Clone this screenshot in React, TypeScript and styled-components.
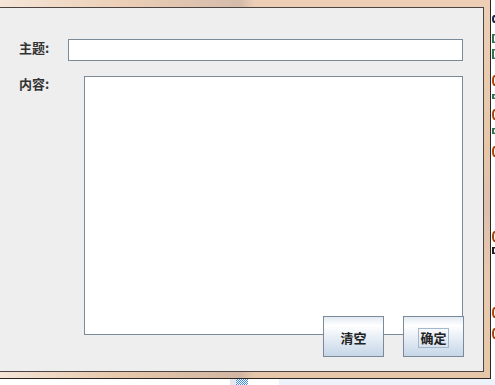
import React, { useState } from 'react';
import styled, { createGlobalStyle } from 'styled-components';

const GlobalStyle = createGlobalStyle`
  html, body {
    margin: 0;
    padding: 0;
    background: #ffffff;
  }
  * {
    box-sizing: border-box;
  }
`;

const Screen = styled.div`
  width: 495px;
  height: 385px;
  display: flex;
  flex-direction: column;
  overflow: hidden;
  background: #ffffff;
  font-family: "Noto Sans CJK SC", "Noto Sans", sans-serif;
`;

const TopRow = styled.div`
  display: flex;
  height: 379px;
`;

// window frame: beige glass border on top, right and bottom
const Frame = styled.div`
  width: 491px;
  height: 379px;
  padding: 7px 6px 6px 0;
  border-right: 1px solid #2b2622;
  border-bottom: 1px solid #2b2622;
  background:
    linear-gradient(90deg, rgba(246,232,220,0.9) 0%, rgba(246,232,220,0) 25%, rgba(170,150,150,0.35) 49%, rgba(255,255,255,0) 52%),
    linear-gradient(180deg, #eccfb6 0%, #e7c6a8 40%, #dcbfae 55%, #e9c9ad 75%, #e6c7aa 100%);
  display: flex;
`;

const Panel = styled.div`
  flex: 1;
  background: #eeeeee;
  border-top: 1px solid #4b4440;
  border-right: 1px solid #4b4440;
  border-bottom: 1px solid #4b4440;
  padding: 31px 0 0 19px;
  display: flex;
  flex-direction: column;
`;

const Row = styled.div<{ $gap?: number }>`
  display: flex;
  align-items: flex-start;
  margin-top: ${p => p.$gap ?? 0}px;
`;

const Label = styled.label<{ $width: number; $offset: number }>`
  width: ${p => p.$width}px;
  padding-top: ${p => p.$offset}px;
  font-size: 13px;
  line-height: 16px;
  font-weight: 700;
  color: #333333;
`;

const TextField = styled.input`
  width: 395px;
  height: 22px;
  border: 1px solid #7a8a99;
  background: #ffffff;
  outline: none;
  padding: 0 3px;
  font-size: 13px;
  font-family: inherit;
`;

const ContentColumn = styled.div`
  width: 380px;
  display: flex;
  flex-direction: column;
`;

const TextArea = styled.textarea`
  width: 379px;
  height: 259px;
  border: 1px solid #7a8a99;
  background: #ffffff;
  outline: none;
  resize: none;
  padding: 2px 3px;
  font-size: 13px;
  font-family: inherit;
`;

const ButtonRow = styled.div`
  display: flex;
  justify-content: flex-end;
  gap: 19px;
  margin-top: -19px;
`;

const Button = styled.button`
  width: 61px;
  height: 41px;
  padding: 0;
  border: 1px solid #7a8a99;
  background: linear-gradient(180deg, #e3eaf2 0%, #ffffff 22%, #e6edf5 55%, #c6d6e8 100%);
  font-family: inherit;
  font-size: 13px;
  font-weight: 700;
  color: #222222;
  display: flex;
  align-items: center;
  justify-content: center;
  cursor: pointer;
`;

const ButtonText = styled.span<{ $focused?: boolean }>`
  display: block;
  line-height: 18px;
  padding: 0 1px;
  margin-top: 2px;
  border: 1px solid ${p => (p.$focused ? '#a3b8cc' : 'transparent')};
`;

// sliver of the desktop behind the dialog (bits of an editor window)
const SideStrip = styled.div`
  width: 4px;
  display: flex;
  flex-direction: column;
  padding-left: 1px;
`;

const Mark = styled.div<{ $color: string; $top: number; $h: number; $ring?: boolean }>`
  margin-top: ${p => p.$top}px;
  height: ${p => p.$h}px;
  width: ${p => (p.$ring ? 5 : 2)}px;
  border: 2px solid ${p => p.$color};
  border-right-color: ${p => (p.$ring ? p.$color : 'transparent')};
  border-radius: ${p => (p.$ring ? '50%' : '0')};
`;

const BottomStrip = styled.div`
  height: 6px;
  display: flex;
`;

const Segment = styled.div<{ $width: number; $bg: string }>`
  width: ${p => p.$width}px;
  background: ${p => p.$bg};
`;

const Checker = styled.div`
  width: 12px;
  background-color: #ffffff;
  background-image: repeating-conic-gradient(#3d8ef0 0% 25%, #ffffff 0% 50%);
  background-size: 2px 2px;
`;

const marks = [
  { color: '#1e2a4a', top: 15, h: 8, ring: true },
  { color: '#2a7a5a', top: 11, h: 9 },
  { color: '#2a7a5a', top: 6, h: 10 },
  { color: '#a8460a', top: 16, h: 11, ring: true },
  { color: '#2a7a5a', top: 8, h: 5 },
  { color: '#a8460a', top: 10, h: 11, ring: true },
  { color: '#2a7a5a', top: 8, h: 6 },
  { color: '#a8460a', top: 12, h: 11, ring: true },
  { color: '#a8460a', top: 74, h: 11, ring: true },
  { color: '#222222', top: 5, h: 7 },
  { color: '#a8460a', top: 53, h: 11, ring: true },
  { color: '#a8460a', top: 10, h: 11, ring: true },
];

const App = () => {
  const [title, setTitle] = useState('');
  const [content, setContent] = useState('');

  return (
    <>
      <GlobalStyle />
      <Screen>
        <TopRow>
          <Frame>
            <Panel>
              <Row>
                <Label $width={49} $offset={1}>主题:</Label>
                <TextField value={title} onChange={e => setTitle(e.currentTarget.value)} />
              </Row>
              <Row $gap={15}>
                <Label $width={65} $offset={0}>内容:</Label>
                <ContentColumn>
                  <TextArea value={content} onChange={e => setContent(e.currentTarget.value)} />
                  <ButtonRow>
                    <Button onClick={() => { setTitle(''); setContent(''); }}>
                      <ButtonText>清空</ButtonText>
                    </Button>
                    <Button>
                      <ButtonText $focused>确定</ButtonText>
                    </Button>
                  </ButtonRow>
                </ContentColumn>
              </Row>
            </Panel>
          </Frame>
          <SideStrip>
            {marks.map((m, i) => (
              <Mark key={i} $color={m.color} $top={m.top} $h={m.h} $ring={m.ring} />
            ))}
          </SideStrip>
        </TopRow>
        <BottomStrip>
          <Segment $width={230} $bg="#ffffff" />
          <Segment $width={6} $bg="#e4e8ee" />
          <Checker />
          <Segment $width={31} $bg="#ffffff" />
          <Segment $width={216} $bg="#eef3fb" />
        </BottomStrip>
      </Screen>
    </>
  );
};

export default App;
